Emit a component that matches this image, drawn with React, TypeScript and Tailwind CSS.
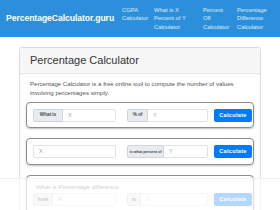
import React from 'react';

const navLinks = [
  { label: ['CGPA', 'Calculator'], width: 'w-[30px]' },
  { label: ['What is X', 'Percent of Y', 'Calculator'], width: 'w-[47px]' },
  { label: ['Percent', 'Off', 'Calculator'], width: 'w-[32px]' },
  { label: ['Percentage', 'Difference', 'Calculator'], width: 'w-[40px]' },
];

const Addon: React.FC<{ text: string; w: string; small?: boolean }> = ({ text, w, small }) => (
  <div
    className={`${w} h-full flex items-center justify-center bg-[#e9ecef] border border-[#ced4da] rounded-l-[2px] font-bold text-[#495057] whitespace-nowrap tracking-[-0.1px] ${
      small ? 'text-[4px]' : 'text-[4.8px]'
    }`}
  >
    {text}
  </div>
);

const Field: React.FC<{ placeholder: string; w: string; left?: boolean }> = ({ placeholder, w, left }) => (
  <div
    className={`${w} h-full flex items-center pl-[5px] bg-white border border-[#dfe3e6] text-[5.5px] text-[#9aa0a6] ${
      left ? 'rounded-[2px]' : 'border-l-0 rounded-r-[2px]'
    }`}
  >
    {placeholder}
  </div>
);

const CalcButton: React.FC = () => (
  <button className="ml-auto -mr-[5px] w-[38px] h-[13px] bg-[#007bff] rounded-[2px] text-white text-[5.6px] font-bold tracking-[0.3px]">
    Calculate
  </button>
);

export default function App() {
  return (
    <div className="relative w-[280px] h-[210px] overflow-hidden bg-white font-['Liberation_Sans',Arial,sans-serif]">
      <header className="h-[37px] bg-[#2b8fdc] flex items-center pl-[6px]">
        <div className="text-white font-bold text-[8.6px] tracking-[-0.05px] w-[116px]">
          PercentageCalculator.guru
        </div>
        <nav className="flex gap-[2px] text-[5.8px] leading-[8.5px] text-white/80">
          {navLinks.map((l) => (
            <div key={l.label.join()} className={`${l.width} shrink-0`}>
              {l.label.map((s) => (
                <div key={s} className="whitespace-nowrap">{s}</div>
              ))}
            </div>
          ))}
        </nav>
      </header>

      <div className="mt-[10px] ml-[19px] w-[242px] border border-[#dcdcdc] rounded-[3px]">
        <div className="h-[26px] bg-[#f7f7f7] border-b border-[#e6e6e6] flex items-center pl-[10px] text-[11px] text-[#333]">
          Percentage Calculator
        </div>
        <div className="pt-[5px] pb-[10px]">
          <p className="px-[10px] text-[6.1px] leading-[9px] text-[#555]">
            Percentage Calculator is a free online tool to compute the number of values involving percentages simply.
          </p>

          <div className="mt-[5px] ml-[6px] w-[228px] h-[26px] border border-[#8c8c8c] rounded-[4px] shadow-[0_1px_2px_rgba(0,0,0,0.25)] flex items-center px-[6px]">
            <div className="flex h-[13px]">
              <Addon text="What is" w="w-[30px]" />
              <Field placeholder="X" w="w-[53px]" />
            </div>
            <div className="flex h-[13px] ml-[11px]">
              <Addon text="% of" w="w-[21px]" />
              <Field placeholder="Y" w="w-[60px]" />
            </div>
            <CalcButton />
          </div>

          <div className="mt-[10px] ml-[6px] w-[228px] h-[27px] border border-[#8c8c8c] rounded-[4px] shadow-[0_1px_2px_rgba(0,0,0,0.25)] flex items-center px-[6px]">
            <div className="flex h-[13px]">
              <Field placeholder="X" w="w-[83px]" left />
            </div>
            <div className="flex h-[13px] ml-[11px]">
              <Addon text="is what percent of" w="w-[37px]" small />
              <Field placeholder="Y" w="w-[44px]" />
            </div>
            <CalcButton />
          </div>

          <div className="mt-[10px] ml-[6px] w-[228px] border border-[#8c8c8c] rounded-[4px] shadow-[0_1px_2px_rgba(0,0,0,0.25)] px-[6px] pt-[6px] pb-[6px]">
            <div className="pl-[3px] text-[6.2px] text-[#555] leading-[9px]">What is Percentage difference</div>
            <div className="flex items-center mt-[2px]">
              <div className="flex h-[13px]">
                <Addon text="from" w="w-[20px]" />
                <Field placeholder="X" w="w-[63px]" />
              </div>
              <div className="flex h-[13px] ml-[11px]">
                <Addon text="to" w="w-[14px]" />
                <Field placeholder="Y" w="w-[67px]" />
              </div>
              <CalcButton />
            </div>
          </div>
        </div>
      </div>

      <div className="absolute left-0 right-0 top-[178px] bottom-0 bg-white/70 border-t border-[#f0f0f0]" />
    </div>
  );
}
